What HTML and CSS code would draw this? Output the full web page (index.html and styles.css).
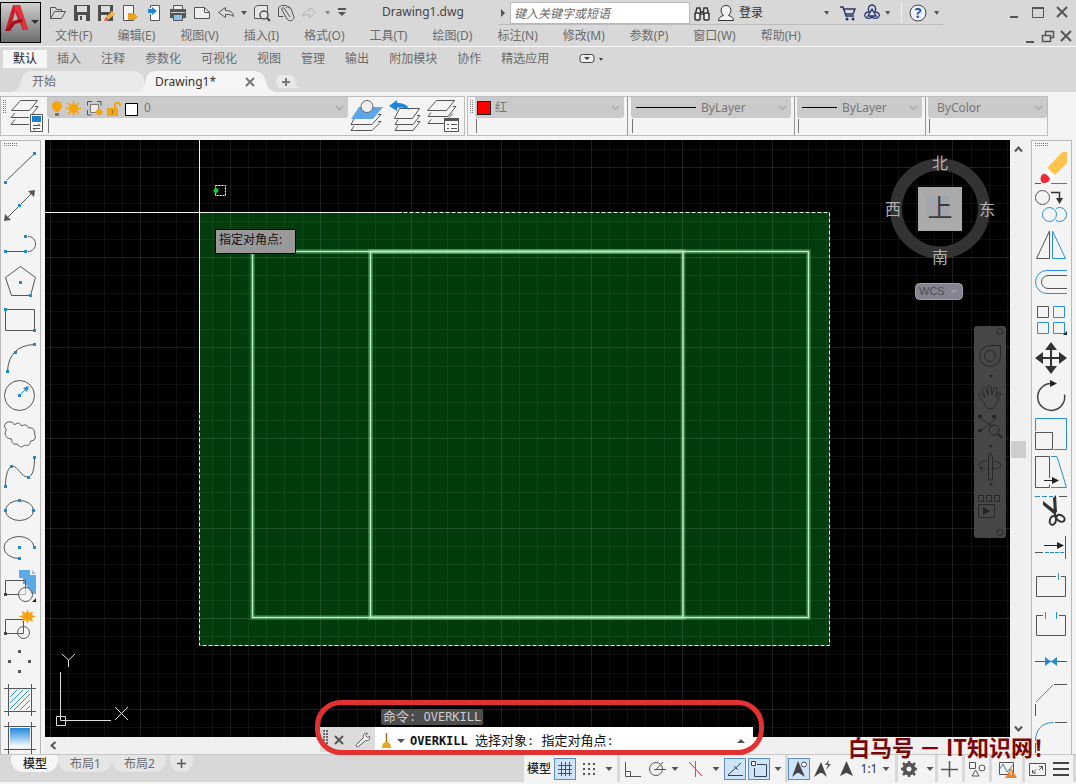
FILE: index.html
```html
<!DOCTYPE html>
<html lang="zh-CN">
<head>
<meta charset="utf-8">
<title>Drawing1.dwg</title>
<link rel="stylesheet" href="styles.css">
</head>
<body>
<div class="app">
  <header class="top">
    <button class="logo" aria-label="应用程序菜单">
      <svg width="41" height="42" viewBox="0 2 41 42">
        <defs><linearGradient id="lg" x1="0" y1="0" x2="0" y2="1"><stop offset="0" stop-color="#d0d0d0"/><stop offset="1" stop-color="#6c6c6c"/></linearGradient></defs>
        <rect x=".5" y="2.500" width="40" height="40" fill="url(#lg)" stroke="#000"/>
        <path d="M13 5h7l8 25h-5l-8-18-5 19H5z" fill="#c8202b"/>
        <path d="M14 5h6l8 24-4 1-7-19-2 1z" fill="#e0343c"/>
        <path d="M5 31l9-11 8-1 1 3-8 2-5 7z" fill="#a3141f"/>
        <path d="M15 15l2 5-4 1z" fill="#b9b9b9"/>
        <path d="M31 20h8l-4 4z" fill="#333"/>
      </svg>
    </button>
    <div class="top-main">
      <div class="titlebar">
        <div class="quick">
          <button class="tb" aria-label="打开"><svg viewBox="46 2 24 22"><path class="s" d="M50.500 18.500v-11h5l1 2h5v2M50.500 18.500l4-7h11l-4 7z"/></svg></button>
          <button class="tb" aria-label="保存"><svg viewBox="70 2 24 22"><path d="M74 5h16v16H75l-1-1z" fill="#4d4d4d"/><path d="M77 6h10v6H77z" fill="#ddd"/><path d="M78 15h8v6h-8z" fill="#ddd"/><path d="M80 16h2v4h-2z" fill="#4d4d4d"/></svg></button>
          <button class="tb" aria-label="另存为"><svg viewBox="94 2 24 22"><path d="M98 5h15v16H98z" fill="#4d4d4d"/><path d="M101 6h9v6h-9z" fill="#ddd"/><path d="M101 15h6v6h-6z" fill="#ddd"/><path d="M105 18l7-7 3 3-7 6-4 1z" fill="#f2b33c"/><path d="M104 21l2-4 3 3z" fill="#e55"/></svg></button>
          <button class="tb" aria-label="新建"><svg viewBox="118 2 24 22"><path d="M123.500 5.500h10v15h-10z" fill="#f4f4f4" stroke="#555"/><path d="M128 20v-7h4l1 1h3v2h2l-3 4z" fill="#eea320"/></svg></button>
          <button class="tb" aria-label="打开自移动端"><svg viewBox="142 2 24 22"><path d="M150.500 8V5.500h9v15h-9V14" fill="#fff" stroke="#555"/><path d="M148 9h4V7l5 4-5 4v-2h-4z" fill="#1d86d8"/></svg></button>
          <button class="tb" aria-label="打印"><svg viewBox="166 2 24 22"><path d="M170 9h16v9h-16z" fill="#555"/><path d="M173.500 5.500h9v4h-9z" fill="#eee" stroke="#555"/><path d="M173.500 14.500h9v6h-9z" fill="#8fc0e8" stroke="#555"/><path d="M171 12h14v1h-14z" fill="#ccc"/></svg></button>
          <button class="tb" aria-label="图纸"><svg viewBox="190 2 24 22"><path d="M194.500 18.500v-11h10l5 5v6z" fill="#eee" stroke="#555"/><path class="s" d="M204.500 7.500v5h5"/></svg></button>
          <button class="tb" aria-label="放弃"><svg viewBox="214 2 24 22"><path class="s" d="M218.500 12.500l7-5v3c5 0 8 2 8 6-2-2-4-2-8-2v3z"/></svg></button>
          <button class="dd" aria-label="放弃列表"><svg viewBox="0 0 12 22"><path d="M3 9h6l-3 4z"/></svg></button>
          <button class="tb" aria-label="打印预览"><svg viewBox="250 2 24 22"><path d="M254.500 16.500v-9l3-2h10v13h-13z" fill="#e6e6e6" stroke="#555"/><circle cx="264" cy="15" r="4" fill="#e6e6e6" stroke="#555" stroke-width="1.500"/><path d="M267 18l3 3" stroke="#444" stroke-width="2"/></svg></button>
          <button class="tb" aria-label="图纸集"><svg viewBox="274 2 24 22"><path class="s" d="M278.500 16.500v-9l3-2h5l3 3M278.500 16.500h5M286 8c2-3 4-1 5 1l3 8c0 4-5 5-7 2l-5-9c-1-2 1-3 2-2l6 9"/></svg></button>
          <button class="tb" aria-label="重做"><svg viewBox="298 2 24 22"><path d="M302.500 16.500c1-4 3-6 7-6v-3l6 5-6 5v-3c-3 0-5 0-7 2z" fill="none" stroke="#b5b5b5"/></svg></button>
          <button class="dd pale" aria-label="重做列表"><svg viewBox="0 0 12 22"><path d="M3 9h5l-2 4z"/></svg></button>
          <button class="dd wide" aria-label="自定义"><svg viewBox="0 0 16 22"><path d="M4 6h8v2H4zM4 10h8l-4 4z"/></svg></button>
        </div>
        <h1 class="doc-title">Drawing1.dwg</h1>
        <div class="info">
          <button class="dd tiny" aria-label="折叠"><svg viewBox="0 0 12 22"><path d="M3 7l4 4-4 4z"/></svg></button>
          <input class="search" type="text" aria-label="搜索" placeholder="键入关键字或短语">
          <button class="tb" aria-label="搜索"><svg viewBox="690 2 24 22"><g fill="#eee" stroke="#333" stroke-width="1.500"><path d="M695 15l2-7h3l1 7M703 15l1-7h3l2 7"/><rect x="695" y="13" width="5" height="7" rx="1"/><rect x="704" y="13" width="5" height="7" rx="1"/><path d="M700 12h4"/></g></svg></button>
          <button class="login"><svg width="24" height="22" viewBox="714 2 24 22"><path d="M718.500 20.500c0-3 2-4 5-5-4-4-3-10 2.500-10s6.500 6 2.500 10c3 1 5 2 5 5z" fill="#f2f2f2" stroke="#333"/></svg>登录</button>
          <button class="dd spaced" aria-label="登录选项"><svg viewBox="0 0 12 22"><path d="M3 9h5l-2 4z"/></svg></button>
          <button class="tb" aria-label="应用商店"><svg viewBox="836 2 24 22"><path d="M840 7h3l3 9h8M844 9h11l-2 5h-8" fill="none" stroke="#27366a" stroke-width="1.500"/><circle cx="847" cy="19" r="1.500" fill="#27366a"/><circle cx="853" cy="19" r="1.500" fill="#27366a"/></svg></button>
          <button class="tb" aria-label="Autodesk"><svg viewBox="860 2 24 22"><path d="M869 12c-2-5 1-7 3-7s5 2 3 7c4 0 5 3 4 4-1 3-5 3-7 1-2 2-6 2-7-1-1-2 1-4 4-4zM872 9l4 7h-8z" fill="none" stroke="#27366a" stroke-width="1.300"/></svg></button>
          <button class="dd spaced" aria-label="更多"><svg viewBox="0 0 12 22"><path d="M1 9h5l-2 4z"/></svg></button>
          <button class="help" aria-label="帮助"><svg width="32" height="22" viewBox="0 0 32 22"><path d="M2.500 1v20" stroke="#f2f2f2"/><circle cx="19" cy="11" r="8" fill="#eef2f8" stroke="#444"/><text x="19" y="16" text-anchor="middle">?</text></svg></button>
          <button class="dd" aria-label="帮助选项"><svg viewBox="0 0 12 22"><path d="M3 9h5l-2 4z"/></svg></button>
        </div>
        <div class="win">
          <button class="tb" aria-label="最小化"><svg viewBox="0 0 24 22"><path d="M8 14h8v2H8z" fill="#555"/></svg></button>
          <button class="tb" aria-label="最大化"><svg viewBox="0 0 24 22"><path d="M6.500 5.500h11v10h-11z" fill="none" stroke="#555"/><path d="M6 5h12v2H6z" fill="#555"/></svg></button>
          <button class="tb" aria-label="关闭"><svg viewBox="0 0 24 22"><path d="M7 5l10 10M17 5L7 15" stroke="#555" stroke-width="2"/></svg></button>
        </div>
      </div>
      <nav class="menubar" aria-label="菜单">
        <button>文件(F)</button><button>编辑(E)</button><button>视图(V)</button><button>插入(I)</button><button>格式(O)</button><button>工具(T)</button><button>绘图(D)</button><button>标注(N)</button><button>修改(M)</button><button>参数(P)</button><button>窗口(W)</button><button>帮助(H)</button>
        <div class="docwin">
          <button aria-label="最小化文档"><svg viewBox="0 0 18 22"><path d="M5 16h8v2H5z" fill="#555"/></svg></button>
          <button aria-label="还原文档"><svg viewBox="0 0 18 22"><path d="M3.500 10.500h8v6h-8zM6.500 10V6.500h8v6H12" fill="none" stroke="#555" stroke-width="1.500"/></svg></button>
          <button aria-label="关闭文档"><svg viewBox="0 0 18 22"><path d="M4 6l10 10M14 6L4 16" stroke="#555" stroke-width="2"/></svg></button>
        </div>
      </nav>
    </div>
  </header>

  <nav class="ribbon" aria-label="功能区">
    <button class="on">默认</button><button>插入</button><button>注释</button><button>参数化</button><button>可视化</button><button>视图</button><button>管理</button><button>输出</button><button>附加模块</button><button>协作</button><button>精选应用</button>
    <button class="ribbon-toggle" aria-label="最小化功能区"><svg width="28" height="14" viewBox="0 0 28 14"><rect x="1" y="2.500" width="14" height="8" rx="2.500" fill="#eee" stroke="#444"/><path d="M5 5h6l-3 3zM20 6h4l-2 3z" fill="#444"/></svg></button>
  </nav>

  <div class="filetabs">
    <button class="ftab start">开始</button>
    <div class="ftab doc"><button>Drawing1*</button><button class="ftab-x" aria-label="关闭标签"><svg width="10" height="10" viewBox="0 0 10 10"><path d="M1 1l8 8M9 1L1 9" stroke="#777" stroke-width="2"/></svg></button></div>
    <button class="ftab add" aria-label="新建标签"><svg width="10" height="10" viewBox="0 0 10 10"><path d="M5 1v8M1 5h8" stroke="#777" stroke-width="2"/></svg></button>
  </div>

  <div class="tools">
    <section class="panel layers" aria-label="图层">
      <span class="grip"></span>
      <button class="big" aria-label="图层特性"><svg width="39" height="38" viewBox="9 97 39 38"><g class="s"><path d="M21.500 100.500h17l-8 10h-18z"/><path d="M36 106.500h3l-6 8M16 113l-4 4.500h18M16 119.500l-4 5h18"/></g><path d="M31.500 114.500h12v17h-12z" fill="#fff" stroke="#555"/><path d="M33 116h9v6h-9z" fill="#1d7fd0"/><path class="s" d="M34 125.500h7l-2-2M41 128.500h-7l2 2"/></svg></button>
      <div class="slot layer-slot">
        <div class="combo">
          <svg width="97" height="20" viewBox="50 97 97 20">
            <circle cx="60" cy="105" r="5" fill="#f7a30c"/><path d="M57 108h6l-1 3h-4z" fill="#f7a30c"/><path d="M58 112h4v3h-4z" fill="#8b7350"/>
            <circle cx="76.500" cy="107.500" r="4.500" fill="#f7a30c"/><path d="M76.500 100v15M69 107.500h15M71 102l11 11M82 102l-11 11" stroke="#f7a30c" stroke-width="1.500"/>
            <path class="s" d="M95 100.500h-4.500v4M90.500 109v5h4M100 100.500h4v4"/><path d="M93.500 103.500h8v8h-8z" fill="#eee" stroke="#777"/><circle cx="102" cy="111" r="3" fill="#f7a30c"/><path d="M102 107v8M98 111h8" stroke="#f7a30c"/>
            <path d="M110 107h11v8h-11z" fill="#f7a30c"/><path d="M118 107v-3c0-3 5-3 5 0v1" fill="none" stroke="#f7a30c" stroke-width="2"/><path d="M115 109h1v4h-1z" fill="#874"/>
            <path d="M128.500 102.500h12v12h-12z" fill="#fff" stroke="#000"/>
          </svg>
          <select aria-label="图层"><option>0</option></select>
          <svg class="chev" width="9" height="6" viewBox="0 0 9 6"><path d="M1 1l3.500 3.500L8 1"/></svg>
        </div>
      </div>
      <button class="big" aria-label="置为当前"><svg width="38" height="38" viewBox="348 97 38 38"><path class="s" d="M354 119l-3 5.500h21l9-10h-3M354 126l-3 4.500h21l9-9h-3"/><path d="M359 107h24l-10 12h-22z" fill="#5ba6e6"/><circle cx="367" cy="106.500" r="6" fill="#eee" stroke="#666"/></svg></button>
      <button class="big" aria-label="上一个图层"><svg width="38" height="38" viewBox="387 97 38 38"><path class="s" d="M400.500 108.500h20l-7 10h-18zM418 115.500h3l-7 9h-18l3-5M418 121.500h3l-7 9h-18l3-5"/><path d="M390 106l8-6v3c7 0 11 2 12 7-3-2-7-3-12-2v3z" fill="#1d86dc"/></svg></button>
      <button class="big" aria-label="图层状态"><svg width="38" height="38" viewBox="426 97 38 38"><path class="s" d="M438.500 100.500h18l-8 10h-19zM455 106.500h3l-8 10h-20l3-4M455 113.500l-4 4M446 123.500h-16l3-4"/><path d="M446.500 119.500h14v12h-14z" fill="#fff" stroke="#555"/><path d="M446 118h15v3h-15z" fill="#555"/><path d="M449 124.500h2m2 0h6M449 128.500h2m2 0h6" stroke="#555"/></svg></button>
    </section>
    <section class="panel props" aria-label="特性">
      <span class="grip"></span>
      <div class="slot color-slot"><div class="combo"><span class="swatch"></span><select aria-label="颜色"><option>红</option></select><svg class="chev" width="9" height="6" viewBox="0 0 9 6"><path d="M1 1l3.500 3.500L8 1"/></svg></div></div>
      <div class="slot ltype-slot"><div class="combo"><span class="rule long"></span><select aria-label="线型"><option>ByLayer</option></select><svg class="chev" width="9" height="6" viewBox="0 0 9 6"><path d="M1 1l3.500 3.500L8 1"/></svg></div></div>
      <div class="slot lw-slot"><div class="combo"><span class="rule"></span><select aria-label="线宽"><option>ByLayer</option></select><svg class="chev" width="9" height="6" viewBox="0 0 9 6"><path d="M1 1l3.500 3.500L8 1"/></svg></div></div>
      <div class="slot plot-slot"><div class="combo"><select aria-label="打印样式"><option>ByColor</option></select><svg class="chev" width="9" height="6" viewBox="0 0 9 6"><path d="M1 1l3.500 3.500L8 1"/></svg></div></div>
    </section>
  </div>

  <main class="work">
    <aside class="side left" aria-label="绘图">
      <span class="side-grip"></span>
      <button aria-label="直线"><svg viewBox="1 149 39 38"><path class="s" d="M7 180l26-25"/><path class="p" d="M4 181h3v3H4zM33 152h3v3h-3z"/></svg></button>
      <button aria-label="构造线"><svg viewBox="1 187 39 38"><path class="s" d="M8 217l24-24"/><path d="M35 190l-1 7-6-6zM4 221l1-7 6 6z" fill="#555"/><path class="p" d="M18 204h3v3h-3z"/></svg></button>
      <button aria-label="多段线"><svg viewBox="1 225 39 38"><path class="s" d="M6 251.500h20M28 236.500c10 0 10 15 0 15"/><path class="p" d="M4 250h3v3H4zM24 250h3v3h-3zM24 235h3v3h-3z"/></svg></button>
      <button aria-label="多边形"><svg viewBox="1 263 39 38"><path class="s" d="M20.500 266.500l15 11-5 18h-19l-6-18z"/><path class="p" d="M19 281h3v3h-3zM29 294h3v3h-3z"/></svg></button>
      <button aria-label="矩形"><svg viewBox="1 301 39 38"><path class="s" d="M5.500 309.500h29v21h-29z"/><path class="p" d="M4 308h3v3H4zM33 329h3v3h-3z"/></svg></button>
      <button aria-label="圆弧"><svg viewBox="1 339 39 38"><path class="s" d="M7.500 371Q9 346 34 344.500"/><path class="p" d="M6 370h3v3H6zM14 351h3v3h-3zM33 343h3v3h-3z"/></svg></button>
      <button aria-label="圆"><svg viewBox="1 377 39 38"><circle class="s" cx="19.500" cy="395.500" r="15"/><path d="M19 396l7-7" stroke="#2a87cc"/><path d="M29 386l-2 6-4-4z" fill="#2a87cc"/><path class="p" d="M18 394h3v3h-3z"/></svg></button>
      <button aria-label="修订云线"><svg viewBox="1 415 39 38"><path class="s" d="M6.500 430c-4-4-1-9 4-8 2 0 3 1 4 3 2-3 6-2 7 1 3-2 6-1 7 2 4-1 7 2 6 6 2 4 0 7-4 7 0 4-3 5-6 4-2 3-6 2-7-1-4 1-6-1-6-5-6 0-8-6-5-9z"/></svg></button>
      <button aria-label="样条曲线"><svg viewBox="1 453 39 38"><path class="s" d="M5.500 485c0-10 3-19 7-19 5 0 9 11 15 11 5 0 7-8 7-19"/><path class="p" d="M4 485h3v3H4zM10 465h3v3h-3zM27 476h3v3h-3zM33 456h3v3h-3z"/></svg></button>
      <button aria-label="椭圆"><svg viewBox="1 491 39 38"><ellipse class="s" cx="19.500" cy="510.500" rx="14" ry="10"/><path class="p" d="M18 499h3v3h-3zM4 509h3v3H4zM32 509h3v3h-3z"/></svg></button>
      <button aria-label="椭圆弧"><svg viewBox="1 529 39 38"><path class="s" d="M34 547A15 11 0 1 0 19 558.500"/><path class="p" d="M18 546h3v3h-3zM33 546h3v3h-3zM18 557h3v3h-3z"/></svg></button>
      <button aria-label="插入块"><svg viewBox="1 567 39 38"><path d="M19 570h11v5h6v19h-5l-5-10h-3v-6h-4z" fill="#5da9e8"/><path d="M32 570l4 4h-4z" fill="#8cc2ee"/><path class="s" d="M5.500 580.500h20v14h-20z"/><circle cx="25.500" cy="594.500" r="7" fill="#f4f4f4" fill-opacity=".6" stroke="#555"/><path d="M4 593h3v3H4z" fill="#444"/><path d="M36 598v4h-4z" fill="#222"/></svg></button>
      <button aria-label="创建块"><svg viewBox="1 605 39 38"><path class="s" d="M5.500 619.500h18v14h-18z"/><circle class="s" cx="23.500" cy="632.500" r="6"/><path d="M4 632h3v3H4z" fill="#444"/><path d="M27.500 609l1.500 4 4-2-1 4 4 1.500-4 1.500 1 4-4-2-1.500 4-1.500-4-4 2 1-4-4-1.500 4-1.500-1-4 4 2z" fill="#f7a30c"/></svg></button>
      <button aria-label="点"><svg viewBox="1 643 39 38"><path d="M18 650h3v3h-3zM8 660h3v3H8zM28 660h3v3h-3zM18 670h3v3h-3z" fill="#555"/></svg></button>
      <button aria-label="图案填充"><svg viewBox="1 681 39 38"><path d="M10 697l7-7M10 703l13-13M10 709l19-19M14 710l16-16M20 710l10-10M26 710l4-4" stroke="#2a93e0"/><path class="s" d="M4 688.500h32M4 711.500h32M8.500 684v32M31.500 684v32"/></svg></button>
      <button aria-label="渐变色"><svg viewBox="1 719 39 38"><defs><linearGradient id="gd" x1="0" y1="0" x2="0" y2="1"><stop offset="0" stop-color="#1f86dd"/><stop offset="1" stop-color="#fff"/></linearGradient></defs><path d="M10 728h20v19H10z" fill="url(#gd)"/><path class="s" d="M4 726.500h32M4 749.500h32M8.500 722v32M31.500 722v32"/></svg></button>
    </aside>

    <div class="view">
      <div class="canvas">
        <svg class="drawing" width="100%" height="100%" aria-hidden="true">
          <g transform="translate(-45 -140)">
            <rect x="199" y="212" width="631" height="434" fill="#003c0c"/>
            <g id="grid"></g>
            <g fill="none">
              <path d="M252.500 251.500h556v366h-556z" stroke="#55b068" stroke-opacity=".45" stroke-width="5"/>
              <path d="M370.500 251.500h312.500v366h-312.500z" stroke="#7fd08f" stroke-opacity=".4" stroke-width="5"/>
              <path d="M252.500 251.500h556v366h-556z" stroke="#bdf0c6" stroke-width="1.500"/>
              <path d="M370.500 251.500h312.500v366h-312.500z" stroke="#bdf0c6" stroke-width="1.500"/>
              <path d="M199.500 212.500h630v433h-630z" stroke="#e8f5ea" stroke-dasharray="4 2"/>
              <path d="M199.500 140v273M45 212.500h357" stroke="#f0f0f0"/>
              <path d="M215.500 185.500h10v10h-10z" stroke="#fff" stroke-dasharray="2 1"/>
              <path d="M60.500 672v45M65 720.500h46M56.500 716.500h9v9h-9zM60.500 716v4.500h5M62 654l6.500 6 6.500-6M68.500 660v7M115 707l13 13M128 707l-13 13" stroke="#ddd"/>
            </g>
            <circle cx="216" cy="190.500" r="2.500" fill="#12c832"/>
          </g>
        </svg>
        <div class="tip">指定对角点:</div>
        <div class="cube">
          <svg width="120" height="156" viewBox="880 148 120 156">
            <circle cx="940" cy="208.500" r="44" fill="none" stroke="#333" stroke-width="12"/>
            <rect x="918" y="187" width="44" height="44" fill="#aaa"/><rect x="927" y="196" width="22" height="20" fill="#a2a6ac"/>
            <g class="compass"><text x="940" y="169">北</text><text x="940" y="263">南</text><text x="893" y="215">西</text><text x="987" y="215">东</text></g>
            <text class="face" x="940" y="217">上</text>
            <rect x="915.500" y="283.500" width="47" height="16" rx="4" fill="#85858f" stroke="#a0a0ab"/>
            <text class="wcs" x="919" y="295">WCS</text><path d="M950 290h8l-4 3z" fill="#9a9aac"/>
          </svg>
        </div>
        <div class="navbar">
          <svg width="32" height="212" viewBox="974 326 32 212">
            <rect x="974" y="326" width="32" height="212" rx="3" fill="#474747"/>
            <g fill="none" stroke="#282828">
              <circle cx="1000" cy="331.500" r="3"/><circle cx="1000" cy="532.500" r="3"/>
              <path d="M1000.500 345.500v10a10.500 10.500 0 1 1-10.500-10z"/><circle cx="990" cy="356" r="5.500"/>
              <path d="M984 403l-6-8c0-2 2-3 4 0l3 3-3-9c0-2 3-2 4 0l2 6v-8c0-2 3-2 3 0l1 8 2-7c1-2 3-1 3 1l-1 8 2-4c2-1 3 0 2 2l-4 10c-2 5-10 6-12-2z"/>
              <path d="M979 417l14 10M997 417l-16 14"/><circle cx="994" cy="430" r="5"/><path d="M998 434l4 4" stroke-width="2"/>
              <path d="M988.500 456v24h4v-24l-2-3zM987 461c-10 0-11 7-2 8M994 461c9 1 9 8-1 8M983 466l-3 3 3 3"/>
              <path d="M978.500 495.500h5v6h-5zM986.500 495.500h5v6h-5zM994.500 495.500h5v6h-5zM978.500 504.500h16v13h-16z"/>
            </g>
            <path d="M983 507l7 4-7 4zM989 375h4l-2 3zM989 445h4l-2 3zM989 483h4l-2 3zM978 415h4v3h-4zM992 415h4v3h-4zM978 429h4v3h-4z" fill="#242424"/>
          </svg>
        </div>
      </div>
      <div class="vscroll">
        <button aria-label="向上滚动"><svg width="9" height="7" viewBox="0 0 9 7"><path d="M1 5.500l3.500-4L8 5.500"/></svg></button>
        <span class="thumb"></span>
        <button aria-label="向下滚动"><svg width="9" height="7" viewBox="0 0 9 7"><path d="M1 1.500l3.500 4L8 1.500"/></svg></button>
      </div>
      <div class="hscroll"><button aria-label="向左滚动"><svg width="7" height="9" viewBox="0 0 7 9"><path d="M5.500 1l-4 3.500 4 3.500"/></svg></button></div>
      <div class="history"><span class="cjk">命令</span>: OVERKILL</div>
      <form class="cmd">
        <span class="cmd-grip"></span>
        <button type="button" class="cmd-x" aria-label="关闭命令行"><svg width="10" height="10" viewBox="0 0 10 10"><path d="M1 1l8 8M9 1L1 9" stroke="#555" stroke-width="2"/></svg></button>
        <button type="button" class="cmd-w" aria-label="自定义命令行"><svg width="16" height="16" viewBox="0 0 16 16"><path d="M1.500 12.500l7-7c-1-3 1-5 4-4l-2 2 2 2 2-1c1 3-2 5-4 4l-7 6c-2 1-3-1-2-2z" fill="#f4f4f4" stroke="#555"/></svg></button>
        <div class="cmd-line">
          <svg width="26" height="18" viewBox="0 0 26 18"><path d="M7.500 1v9" stroke="#a0701a" stroke-width="1.500"/><path d="M3 16c0-4 2-6 4.500-6s4.500 2 4.500 6z" fill="#e5a91c"/><path d="M18 7h8l-4 4z" fill="#555"/></svg>
          <label for="cmd"><b>OVERKILL</b> <span class="cjk">选择对象</span>: <span class="cjk">指定对角点</span>:</label>
          <input id="cmd" type="text">
          <svg width="8" height="5" viewBox="0 0 8 5"><path d="M0 4l4-4 4 4z" fill="#555"/></svg>
        </div>
      </form>
      <div class="ring"></div>
      <div class="mark">白马号 － IT知识网！</div>
    </div>

    <aside class="side right" aria-label="修改">
      <span class="side-grip"></span>
      <button aria-label="删除"><svg viewBox="1032 149 39 38"><path d="M1062.500 152h4.500v11l-12 12-8-7z" fill="#ffc24d"/><path d="M1047 168l8 7-4 4-7-7z" fill="#fff"/><path d="M1043.500 174c2-1 6 3 6.500 5-1 4-8 6-9 2-1-3 0-6 2.500-7z" fill="#ee2a35"/><path d="M1035 183.500h6" stroke="#555"/><path d="M1051 183.500h16" stroke="#2a87cc"/></svg></button>
      <button aria-label="复制"><svg viewBox="1032 187 39 38"><circle class="s" cx="1042.500" cy="197.500" r="7"/><path d="M1051 192.500h8.500v6" fill="none" stroke="#333" stroke-width="1.500"/><path d="M1056 198h7l-3.500 6z" fill="#333"/><g class="b"><circle cx="1049.500" cy="214.500" r="7"/><path d="M1056 208.500a7 7 0 1 1 0 12"/></g></svg></button>
      <button aria-label="镜像"><svg viewBox="1032 225 39 38"><path class="s" d="M1049.500 231v27.500h-13z"/><path class="b" d="M1052.500 231v27.500h13z"/></svg></button>
      <button aria-label="偏移"><svg viewBox="1032 263 39 38"><path class="b" d="M1067 270.500h-20a11.500 11.500 0 0 0 0 23h20"/><path class="s" d="M1067 275.500h-19a6.500 6.500 0 0 0 0 13h19"/></svg></button>
      <button aria-label="阵列"><svg viewBox="1032 301 39 38"><path class="s" d="M1037.500 306.500h11v11h-11z"/><path class="b" d="M1053.500 306.500h11v11h-11zM1037.500 322.500h11v11h-11zM1053.500 322.500h11v11h-11z"/><path d="M1067 331v4h-4z" fill="#222"/></svg></button>
      <button aria-label="移动"><svg viewBox="1032 339 39 38"><path d="M1051 342l6 8h-5v7h7v-5l8 6-8 6v-5h-7v7h5l-6 8-6-8h5v-7h-7v5l-8-6 8-6v5h7v-7h-5z" fill="#333"/></svg></button>
      <button aria-label="旋转"><svg viewBox="1032 377 39 38"><path d="M1050 383.500a13.500 13.500 0 1 0 14.500 11" fill="none" stroke="#444" stroke-width="1.500"/><path d="M1050 380l7 3.500-7 3.500z" fill="#222"/></svg></button>
      <button aria-label="缩放"><svg viewBox="1032 415 39 38"><path class="b" d="M1035.500 431v-12.500h31v31h-13"/><path class="s" d="M1035.500 432.500h17v17h-17z"/></svg></button>
      <button aria-label="拉伸"><svg viewBox="1032 453 39 38"><path class="s" d="M1049.500 478v-21.500h-14v31h14v-3"/><path class="b" d="M1051 456.500h6l9.500 31H1051"/><path d="M1044 480.500h9" stroke="#222"/><path d="M1052 477l7 3.500-7 3.500z" fill="#222"/></svg></button>
      <button aria-label="修剪"><svg viewBox="1032 491 39 38"><path d="M1035 496.500h18" stroke="#2a87cc" stroke-dasharray="5 2"/><path d="M1059 496.500h8" stroke="#555"/><path d="M1053 498l3-3 1 17-3 2zM1043 501l13 10-1 4-12-10z" fill="#333"/><g fill="none" stroke="#333" stroke-width="2"><ellipse cx="1053" cy="520.500" rx="3" ry="4.500" transform="rotate(15 1053 520)"/><ellipse cx="1060.500" cy="518" rx="4.500" ry="3" transform="rotate(30 1060 518)"/><path d="M1055 511v5l3 0"/></g></svg></button>
      <button aria-label="延伸"><svg viewBox="1032 529 39 38"><path class="s" d="M1065.500 536v23M1035 552.500h8"/><path d="M1045 552.500h19" stroke="#2a87cc" stroke-dasharray="4 1"/><path d="M1044 545.500h14" stroke="#222"/><path d="M1057 542l7 3.500-7 3.500z" fill="#222"/></svg></button>
      <button aria-label="打断于点"><svg viewBox="1032 567 39 38"><path class="s" d="M1056 576.500h-19.500v20h29v-20H1061"/><path class="b" d="M1058.500 573v7"/></svg></button>
      <button aria-label="打断"><svg viewBox="1032 605 39 38"><path class="s" d="M1043 615.500h-6.500v20h29v-20H1059"/><path class="b" d="M1045.500 612v7M1056.500 612v7"/></svg></button>
      <button aria-label="合并"><svg viewBox="1032 643 39 38"><path class="s" d="M1035 661.500h32"/><path d="M1045 657l6 4.500-6 4.500zM1057 657l-6 4.500 6 4.500z" fill="#2389d8"/></svg></button>
      <button aria-label="倒角"><svg viewBox="1032 681 39 38"><path class="s" d="M1035.500 716v-12M1054 684.500h13"/><path class="b" d="M1036 702l17-17"/></svg></button>
      <button aria-label="圆角"><svg viewBox="1032 719 39 38"><path class="s" d="M1055 722.500h12M1035.500 743v10"/><path class="b" d="M1035.500 741c0-12 7-18.500 18-18.500"/></svg></button>
    </aside>
  </main>

  <footer class="bottom">
    <nav class="layouts" aria-label="布局">
      <button class="on">模型</button><button>布局1</button><button>布局2</button>
      <button class="new" aria-label="新建布局"><svg width="9" height="9" viewBox="0 0 9 9"><path d="M4.500 0v9M0 4.500h9" stroke="#555" stroke-width="1.500"/></svg></button>
    </nav>
    <div class="status">
      <div class="grp">
        <button class="model">模型</button>
        <button class="act" aria-label="栅格"><svg viewBox="0 0 22 22"><path d="M7.500 4v14M11.500 4v14M15.500 4v14M4 7.500h14M4 11.500h14M4 15.500h14" stroke="#456" /></svg></button>
        <button class="w26" aria-label="捕捉"><svg viewBox="0 0 26 22"><path d="M7 5h2v2H7zM12 5h2v2h-2zM17 5h2v2h-2zM7 10h2v2H7zM12 10h2v2h-2zM17 10h2v2h-2zM7 15h2v2H7zM12 15h2v2h-2zM17 15h2v2h-2z" fill="#555"/></svg></button>
        <button class="sd" aria-label="捕捉设置"><svg viewBox="0 0 14 22"><path d="M3 9h7l-3.500 4z"/></svg></button>
      </div>
      <div class="grp">
        <button class="w26" aria-label="正交"><svg viewBox="0 0 26 22"><path class="s" d="M5.500 4v14.500H21M5.500 13.500h5v5"/></svg></button>
        <button class="w22" aria-label="极轴"><svg viewBox="0 0 22 22"><circle class="s" cx="10" cy="11" r="6.500"/><path class="s" d="M8 11.500h12M10 11.500L17 4"/></svg></button>
        <button class="sd" aria-label="极轴设置"><svg viewBox="0 0 14 22"><path d="M3 9h7l-3.500 4z"/></svg></button>
        <button class="w26" aria-label="等轴测"><svg viewBox="0 0 26 22"><path d="M6 4l13 14" stroke="#c02040"/><path d="M12.500 3v16" stroke="#3b9a55"/></svg></button>
        <button class="sd" aria-label="等轴测设置"><svg viewBox="0 0 14 22"><path d="M3 9h7l-3.500 4z"/></svg></button>
        <button class="act" aria-label="对象捕捉追踪"><svg viewBox="0 0 22 22"><path d="M4 17.500h15M4 17L17 5" stroke="#345"/><path d="M10 8l4 4" stroke="#345"/></svg></button>
        <button class="act gap" aria-label="对象捕捉"><svg viewBox="0 0 22 22"><path d="M9 6.500h9.500v12h-12V10" fill="none" stroke="#345"/><path d="M3.500 3.500h4v4h-4z" fill="#fff" stroke="#345"/></svg></button>
        <button class="sd" aria-label="对象捕捉设置"><svg viewBox="0 0 14 22"><path d="M4 9h7l-3.500 4z"/></svg></button>
      </div>
      <div class="grp">
        <button class="act" aria-label="注释可见性"><svg viewBox="0 0 22 22"><path d="M10 3l7 16-6-4H9l-5 4z" fill="#444"/><circle cx="16" cy="6.500" r="2.500" fill="#fff" stroke="#444"/></svg></button>
        <button class="w26" aria-label="自动缩放"><svg viewBox="0 0 26 22"><path d="M11 4l6 15-5-4h-2l-6 4z" fill="#444"/><path d="M19 2l-4 5h3l-2 5 5-6h-3z" fill="#555"/></svg></button>
        <button class="w22" aria-label="注释比例"><svg viewBox="0 0 22 22"><path d="M10.500 3l6.500 15-6-3h-1l-6 3z" fill="#444"/></svg></button>
        <button class="ratio">1:1</button>
        <button class="sd" aria-label="比例列表"><svg viewBox="0 0 14 22"><path d="M2 9h7l-3.500 4z"/></svg></button>
      </div>
      <div class="grp">
        <button class="w22" aria-label="切换工作空间"><svg viewBox="0 0 22 22"><circle cx="11" cy="11" r="4.500" fill="none" stroke="#555" stroke-width="4"/><path d="M11 3v3M11 16v3M3 11h3M16 11h3M5 5l3 3M14 14l3 3M17 5l-3 3M8 14l-3 3" stroke="#555" stroke-width="2.500"/></svg></button>
        <button class="sd" aria-label="工作空间列表"><svg viewBox="0 0 14 22"><path d="M6 9h7l-3.500 4z"/></svg></button>
      </div>
      <div class="grp"><button class="w24" aria-label="注释监视器"><svg viewBox="0 0 24 22"><path d="M11.500 3v16M3 11.500h17" stroke="#555" stroke-width="1.500"/></svg></button></div>
      <div class="grp"><button class="w24" aria-label="隔离对象"><svg viewBox="0 0 24 22"><path class="s" d="M4.500 4.500h6v6h-6zM10.500 12l3.500 6H7z"/><circle class="s" cx="17" cy="10" r="3"/></svg></button></div>
      <div class="grp"><button class="w30" aria-label="硬件加速"><svg viewBox="0 0 30 22"><path class="s" d="M7.500 4.500h14v12h-14z"/><path d="M7 12l4-6 4 8 6-7" fill="none" stroke="#3f7fae"/><path d="M19 10l6 10H13z" fill="#e8822a"/><path d="M18.500 13h1v4h-1z" fill="#fff"/></svg></button></div>
      <div class="grp"><button class="w24" aria-label="全屏"><svg viewBox="0 0 24 22"><path class="s" d="M4.500 5.500h16v12h-16zM7.500 12v3H11M14 8.500h3.500V12M8 14.500l3-3M17 9l-3 3"/></svg></button><button class="w24" aria-label="自定义"><svg viewBox="0 0 24 22"><path d="M4 5h16M4 11h16M4 17h16" stroke="#444" stroke-width="2"/></svg></button></div>
    </div>
  </footer>
</div>
<script src="grid.js"></script>
</body>
</html>
```
FILE: grid.js
```js
// Drafting grid: every fifth line is a major one.
(function () {
  var g = document.getElementById("grid");
  var cell = 90.3 / 5;
  var minor = "", major = "";
  for (var i = 0; i < 160; i++) {
    var x = Math.floor(50 + i * cell) + 0.5;
    var y = Math.floor(149.3 + i * cell) + 0.5;
    var v = "M" + x + " 140V2200";
    var h = "M45 " + y + "H3000";
    if (i % 5 === 0) major += v; else minor += v;
    if (i % 5 === 1) major += h; else minor += h;
  }
  g.innerHTML =
    '<path d="' + minor + '" stroke="#fff" stroke-opacity=".06"/>' +
    '<path d="' + major + '" stroke="#e6e6ff" stroke-opacity=".13"/>';
})();
```
FILE: styles.css
```css
* { box-sizing: border-box; }

body {
  margin: 0;
  font: 12px/16px "Noto Sans", "Noto Sans CJK SC", sans-serif;
  color: #6b6b6b;
  background: #f4f4f4;
}

button, input, select {
  margin: 0;
  padding: 0;
  border: 0;
  background: none;
  font: inherit;
  color: inherit;
}

svg { display: block; flex: none; }
.s { fill: none; stroke: #555; }
.b { fill: none; stroke: #2a8fd6; }
.p { fill: #2389cf; }

.app {
  display: flex;
  flex-direction: column;
  height: 100vh;
  padding-bottom: 2px;
  overflow: hidden;
}

/* Title and menu */
.top {
  display: flex;
  background: #d8d8d8;
  border-bottom: 1px solid #fafafa;
}
.logo { align-self: flex-start; padding-top: 2px; }
.top-main { flex: 1; min-width: 0; }
.titlebar {
  display: flex;
  align-items: flex-start;
  height: 25px;
  padding: 2px 2px 0 5px;
}
.quick, .info, .win { display: flex; align-items: center; flex: none; }
.info { margin: 0 59px 0 auto; border-bottom: 1px solid #bcbcbc; }
.tb { width: 24px; }
.tb svg { width: 24px; height: 22px; }
.dd { width: 12px; fill: #555; }
.dd svg { width: 12px; height: 22px; }
.dd.pale { fill: #888; }
.dd.wide, .dd.wide svg { width: 16px; }
.dd.spaced { width: 15px; }
.doc-title {
  margin: 1px 0 0 32px;
  font-size: 12px;
  line-height: 18px;
  font-weight: 400;
  color: #444;
}
.search {
  width: 180px;
  height: 22px;
  padding: 0 3px;
  background: #fff;
  border: 1px solid #b9b9b9;
  font-style: italic;
}
.search::placeholder { color: #666; opacity: 1; }
.login {
  display: flex;
  align-items: center;
  width: 107px;
  gap: 1px;
  color: #333;
}
.help { width: 32px; }
.help text { font: 700 14px "Noto Sans", sans-serif; fill: #1c4fae; }

.menubar {
  display: flex;
  align-items: center;
  height: 21px;
  padding: 0 1px 0 2px;
}
.menubar > button { padding: 1px 13px 0 12px; white-space: nowrap; }
.docwin { display: flex; margin-left: auto; }
.docwin svg { width: 18px; height: 22px; }

/* Ribbon tabs */
.ribbon {
  display: flex;
  align-items: center;
  height: 23px;
  padding: 0 3px;
  background: #d8d8d8;
}
.ribbon button { height: 18px; padding: 0 10px; line-height: 18px; }
.ribbon .on { background: #f6f6f6; color: #222; }
.ribbon .ribbon-toggle { padding: 2px 20px; }

/* Document tabs */
.filetabs {
  display: flex;
  height: 22px;
  padding-left: 12px;
  background: #d8d8d8;
}
.ftab { height: 22px; background: #e9e9e9; line-height: 22px; text-align: left; }
.start {
  width: 133px;
  padding: 1px 0 0 20px;
  clip-path: path("M0 22Q8 20 10 8Q12 1 20 1H122Q131 2 132 10V22Z");
}
.doc {
  display: flex;
  align-items: center;
  width: 136px;
  margin-left: -6px;
  padding: 1px 0 0 16px;
  gap: 29px;
  background: #f5f5f5;
  color: #333;
  clip-path: path("M0 22Q6 18 7 8Q9 1 18 1H116Q124 2 126 9Q128 20 136 22Z");
}
.add {
  width: 24px;
  padding: 1px 0 0 6px;
  clip-path: path("M5 18Q2 17 1 11Q1 5 5 5H14Q19 5 20 11Q21 17 24 18Z");
}

/* Toolbars */
.tools {
  display: flex;
  gap: 2px;
  height: 48px;
  padding: 4px 0;
}
.panel { display: flex; border: 1px solid #bdbdbd; height: 40px; }
.layers { width: 465px; padding-right: 2px; }
.props { width: 581px; }
.grip, .side-grip {
  flex: none;
  background: conic-gradient(at 1px 1px, transparent 75%, #777 0) 0 0 / 2px 2px;
}
.grip { width: 3px; height: 13px; margin: 3px 2px 0 2px; }
.big { flex: none; }
.slot { display: flex; flex-direction: column; }
.slot::after {
  content: "";
  width: 1px;
  height: 14px;
  margin: 1px 0 0 1px;
  background: #777;
}
.layer-slot { flex: 1; }
.color-slot, .ltype-slot, .lw-slot { border-right: 1px solid #999; }
.color-slot { width: 153px; padding-right: 3px; }
.ltype-slot { width: 167px; padding: 0 3px; }
.lw-slot { width: 131px; padding: 0 3px 0 2px; }
.plot-slot { flex: 1; padding-left: 2px; }
.combo {
  position: relative;
  display: flex;
  align-items: center;
  height: 21px;
  background: #cacaca;
  border-radius: 0 0 3px 3px;
}
.combo select { flex: 1; min-width: 0; appearance: none; outline: 0; color: #777; }
.chev { position: absolute; right: 4px; fill: none; stroke: #aaa; stroke-width: 1.5; pointer-events: none; }
.swatch { width: 14px; height: 14px; margin: 0 4px 0 2px; background: #f00; border: 1px solid #222; }
.rule { width: 35px; height: 1px; margin: 0 5px 0 5px; background: #000; }
.rule.long { width: 60px; }
.plot-slot select { padding-left: 9px; }

/* Work area */
.work { flex: 1; display: flex; min-height: 0; }
.side {
  flex: none;
  width: 41px;
  overflow: hidden;
  border: 1px solid #b9b9b9;
  border-bottom: 0;
}
.side button { display: block; }
.side button svg { width: 39px; height: 38px; }
.side-grip {
  display: block;
  width: 14px;
  height: 4px;
  margin: 2px 0 2px 3px;
}
.right { margin-right: 4px; }
.view {
  position: relative;
  flex: 1;
  min-width: 0;
  margin-left: 4px;
  display: grid;
  grid-template: 1fr 17px / 1fr 21px;
  background: #f0f0f0;
}
.canvas { position: relative; overflow: hidden; background: #000; }
.drawing { position: absolute; inset: 0; }
.tip {
  position: absolute;
  left: 170px;
  top: 89px;
  width: 81px;
  height: 25px;
  padding: 2px 3px;
  background: #999;
  border: 1px solid #000;
  color: #111;
  white-space: nowrap;
}
.cube { position: absolute; right: 10px; top: 8px; }
.compass { font-size: 16px; fill: #b0b0b0; text-anchor: middle; }
.face { font-size: 25px; fill: #3a3a3a; text-anchor: middle; }
.wcs { font: 11px "Liberation Sans", sans-serif; fill: #4c4c56; }
.navbar { position: absolute; right: 4px; top: 186px; }

.vscroll {
  display: flex;
  flex-direction: column;
  align-items: center;
  justify-content: space-between;
  padding: 6px 4px 5px 0;
}
.vscroll svg, .hscroll svg { fill: none; stroke: #555; stroke-width: 2; }
.thumb { width: 15px; height: 17px; margin-top: 20px; background: #cdcdcd; }
.hscroll { grid-column: 1 / -1; padding: 4px 5px; }
.hscroll button { display: block; }

/* Floating command line */
.history {
  position: absolute;
  left: 336px;
  bottom: 29px;
  padding: 0 2px;
  border-radius: 2px;
  background: #4d4d4d;
  color: #ccc;
  font: 12px/16px "DejaVu Sans Mono", "Noto Sans CJK SC", monospace;
}
.cjk { font-size: 13px; }
.cmd {
  position: absolute;
  left: 275px;
  bottom: 2px;
  display: flex;
  align-items: center;
  width: 433px;
  height: 25px;
  background: #dcdcdc;
}
.cmd-grip {
  flex: none;
  width: 6px;
  height: 14px;
  margin: 0 5px 6px 3px;
  background: conic-gradient(at 2px 2px, transparent 75%, #666 0) 0 0 / 3px 3px;
}
.cmd-w { margin: 0 4px 0 11px; }
.cmd-line {
  flex: 1;
  min-width: 0;
  align-self: stretch;
  display: flex;
  align-items: center;
  gap: 5px;
  padding: 3px 8px 0 4px;
  background: #fff;
  color: #111;
  font: 12px/20px "DejaVu Sans Mono", "Noto Sans CJK SC", monospace;
}
.cmd-line label { white-space: nowrap; }
.cmd-line input { flex: 1; width: 0; min-width: 0; outline: 0; }
.ring {
  position: absolute;
  left: 270px;
  bottom: -1px;
  width: 449px;
  height: 55px;
  border: 5px solid #e23131;
  border-radius: 26px;
  pointer-events: none;
}
.mark {
  position: absolute;
  right: -24px;
  bottom: -2px;
  z-index: 1;
  white-space: nowrap;
  font: 700 22px/20px "Noto Sans CJK SC", sans-serif;
  color: #7c0606;
  pointer-events: none;
}

/* Layout tabs and status bar */
.bottom {
  display: flex;
  height: 28px;
  flex: none;
  background: #d8d8d8;
  border-top: 1px solid #c6c6c6;
}
.layouts { display: flex; align-items: flex-start; padding-left: 11px; }
.layouts button {
  height: 17px;
  padding: 0 11px 0 12px;
  background: #e6e6e6;
  border-radius: 3px 3px 12px 12px;
  line-height: 17px;
}
.layouts .on { background: #f6f6f6; color: #222; font-weight: 500; }
.layouts .new { padding: 0 7px; margin-left: 4px; }
.status { display: flex; gap: 3px; margin-left: auto; padding-right: 3px; }
.grp { display: flex; align-items: center; background: #f3f3f3; }
.grp svg { height: 22px; width: 100%; }
.model { width: 30px; color: #222; font-weight: 500; }
.act { width: 22px; background: #cfe4f8; outline: 1px solid #5c8fc0; outline-offset: -1px; }
.act.gap { margin-left: 2px; }
.w22 { width: 22px; }
.w24 { width: 24px; }
.w26 { width: 26px; }
.w30 { width: 30px; }
.sd { width: 15px; fill: #555; }
.ratio { width: 22px; color: #333; }
```
